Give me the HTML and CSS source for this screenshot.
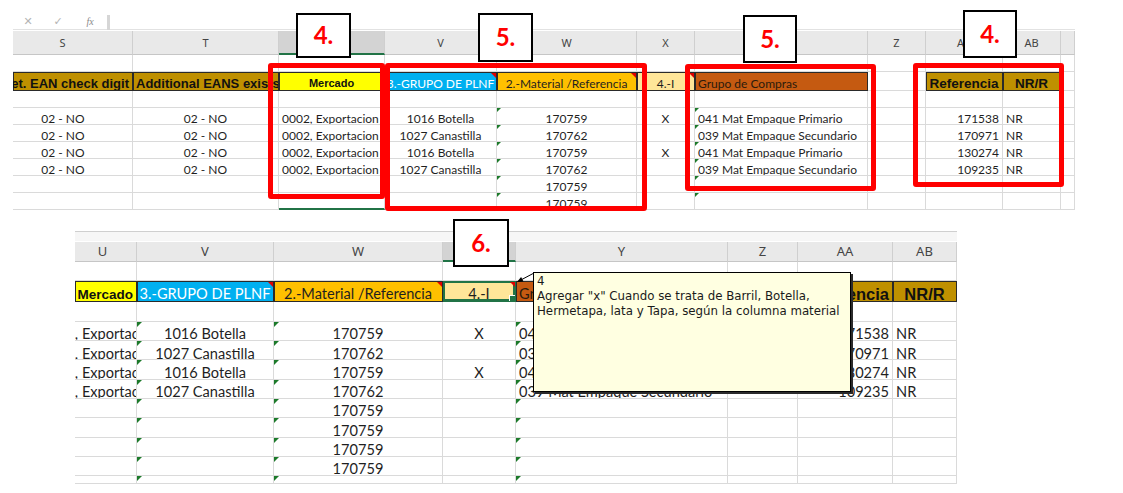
FILE: index.html
```html
<!DOCTYPE html>
<html lang="es">
<head>
<meta charset="utf-8">
<title>Hoja</title>
<link rel="stylesheet" href="styles.css">
</head>
<body>
<div class="page">
  <section class="sheet top">
    <div class="fbar">
      <span class="fico">✕</span>
      <span class="fico">✓</span>
      <span class="fico fx">fx</span>
      <span class="fsep"></span>
      <span class="finput"></span>
    </div>
    <div class="row colhdr">
      <div class="h offs">S</div><div class="h">T</div><div class="h sel">U</div><div class="h">V</div><div class="h">W</div><div class="h">X</div><div class="h">Y</div><div class="h">Z</div><div class="h">AA</div><div class="h">AB</div><div class="h"></div>
    </div>
    <div class="row r17">
      <div class="c"></div><div class="c"></div><div class="c"></div><div class="c"></div><div class="c"></div><div class="c"></div><div class="c"></div><div class="c"></div><div class="c"></div><div class="c"></div><div class="c"></div>
    </div>
    <div class="row r19">
      <div class="c tan bold rt">Ret. EAN check digit</div>
      <div class="c tan bold">Additional EANS exists</div>
      <div class="c yel bold sm ctr">Mercado</div>
      <div class="c blue ctr cm">3.-GRUPO DE PLNF</div>
      <div class="c org ctr cm">2.-Material /Referencia</div>
      <div class="c lt ctr cm">4.-I</div>
      <div class="c brn">Grupo de Compras</div>
      <div class="c"></div>
      <div class="c tan bold lg ctr">Referencia</div>
      <div class="c tan bold lg ctr">NR/R</div>
      <div class="c"></div>
    </div>
    <div class="row r17">
      <div class="c"></div><div class="c"></div><div class="c"></div><div class="c"></div><div class="c"></div><div class="c"></div><div class="c"></div><div class="c"></div><div class="c"></div><div class="c"></div><div class="c"></div>
    </div>
    <div class="row r17">
      <div class="c ctr offs">02 - NO</div><div class="c ctr">02 - NO</div><div class="c">0002, Exportacion</div><div class="c ctr">1016 Botella</div><div class="c ctr g">170759</div><div class="c ctr">X</div><div class="c g">041 Mat Empaque Primario</div><div class="c"></div><div class="c rt">171538</div><div class="c">NR</div><div class="c"></div>
    </div>
    <div class="row r17">
      <div class="c ctr offs">02 - NO</div><div class="c ctr">02 - NO</div><div class="c">0002, Exportacion</div><div class="c ctr">1027 Canastilla</div><div class="c ctr g">170762</div><div class="c ctr"></div><div class="c g">039 Mat Empaque Secundario</div><div class="c"></div><div class="c rt">170971</div><div class="c">NR</div><div class="c"></div>
    </div>
    <div class="row r17">
      <div class="c ctr offs">02 - NO</div><div class="c ctr">02 - NO</div><div class="c">0002, Exportacion</div><div class="c ctr">1016 Botella</div><div class="c ctr g">170759</div><div class="c ctr">X</div><div class="c g">041 Mat Empaque Primario</div><div class="c"></div><div class="c rt">130274</div><div class="c">NR</div><div class="c"></div>
    </div>
    <div class="row r17">
      <div class="c ctr offs">02 - NO</div><div class="c ctr">02 - NO</div><div class="c">0002, Exportacion</div><div class="c ctr">1027 Canastilla</div><div class="c ctr g">170762</div><div class="c ctr"></div><div class="c g">039 Mat Empaque Secundario</div><div class="c"></div><div class="c rt">109235</div><div class="c">NR</div><div class="c"></div>
    </div>
    <div class="row r17">
      <div class="c"></div><div class="c"></div><div class="c"></div><div class="c"></div><div class="c ctr g">170759</div><div class="c"></div><div class="c g"></div><div class="c"></div><div class="c"></div><div class="c"></div><div class="c"></div>
    </div>
    <div class="row r17">
      <div class="c"></div><div class="c"></div><div class="c selbot"></div><div class="c"></div><div class="c ctr g">170759</div><div class="c"></div><div class="c g"></div><div class="c"></div><div class="c"></div><div class="c"></div><div class="c"></div>
    </div>
  </section>

  <section class="sheet bottom">
    <div class="strip"></div>
    <div class="row colhdr">
      <div class="h offu">U</div><div class="h">V</div><div class="h">W</div><div class="h sel"></div><div class="h">Y</div><div class="h">Z</div><div class="h">AA</div><div class="h">AB</div>
    </div>
    <div class="row r20">
      <div class="c"></div><div class="c"></div><div class="c"></div><div class="c"></div><div class="c"></div><div class="c"></div><div class="c"></div><div class="c"></div>
    </div>
    <div class="row r21">
      <div class="c yel bold sm rt">Mercado</div>
      <div class="c blue ctr cm">3.-GRUPO DE PLNF</div>
      <div class="c org ctr cm">2.-Material /Referencia</div>
      <div class="c lt ctr cm active">4.-I</div>
      <div class="c brn">Grupo de Compras</div>
      <div class="c"></div>
      <div class="c tan bold lg rt">Referencia</div>
      <div class="c tan bold lg ctr">NR/R</div>
    </div>
    <div class="row r20">
      <div class="c"></div><div class="c"></div><div class="c"></div><div class="c"></div><div class="c"></div><div class="c"></div><div class="c"></div><div class="c"></div>
    </div>
    <div class="row rd">
      <div class="c cut">0002, Exportacion</div><div class="c ctr g">1016 Botella</div><div class="c ctr g">170759</div><div class="c ctr">X</div><div class="c g">041 Mat Empaque Primario</div><div class="c"></div><div class="c rt">171538</div><div class="c">NR</div>
    </div>
    <div class="row rd">
      <div class="c cut">0002, Exportacion</div><div class="c ctr g">1027 Canastilla</div><div class="c ctr g">170762</div><div class="c ctr"></div><div class="c g">039 Mat Empaque Secundario</div><div class="c"></div><div class="c rt">170971</div><div class="c">NR</div>
    </div>
    <div class="row rd">
      <div class="c cut">0002, Exportacion</div><div class="c ctr g">1016 Botella</div><div class="c ctr g">170759</div><div class="c ctr">X</div><div class="c g">041 Mat Empaque Primario</div><div class="c"></div><div class="c rt">130274</div><div class="c">NR</div>
    </div>
    <div class="row rd">
      <div class="c cut">0002, Exportacion</div><div class="c ctr g">1027 Canastilla</div><div class="c ctr g">170762</div><div class="c ctr"></div><div class="c g">039 Mat Empaque Secundario</div><div class="c"></div><div class="c rt">109235</div><div class="c">NR</div>
    </div>
    <div class="row rd">
      <div class="c"></div><div class="c g"></div><div class="c ctr g">170759</div><div class="c"></div><div class="c g"></div><div class="c"></div><div class="c"></div><div class="c"></div>
    </div>
    <div class="row rd">
      <div class="c"></div><div class="c g"></div><div class="c ctr g">170759</div><div class="c"></div><div class="c g"></div><div class="c"></div><div class="c"></div><div class="c"></div>
    </div>
    <div class="row rd">
      <div class="c"></div><div class="c g"></div><div class="c ctr g">170759</div><div class="c"></div><div class="c g"></div><div class="c"></div><div class="c"></div><div class="c"></div>
    </div>
    <div class="row rd">
      <div class="c"></div><div class="c g"></div><div class="c ctr g">170759</div><div class="c"></div><div class="c g"></div><div class="c"></div><div class="c"></div><div class="c"></div>
    </div>
    <div class="row rlast">
      <div class="c"></div><div class="c g"></div><div class="c g"></div><div class="c"></div><div class="c g"></div><div class="c"></div><div class="c"></div><div class="c"></div>
    </div>
  </section>

  <div class="redbox rb1"></div>
  <div class="redbox rb2"></div>
  <div class="redbox rb3"></div>
  <div class="redbox rb4"></div>

  <div class="tag t1">4.</div>
  <div class="tag t2">5.</div>
  <div class="tag t3">5.</div>
  <div class="tag t4">4.</div>
  <div class="tag t5">6.</div>

  <svg class="connector" width="30" height="22" viewBox="0 0 30 22">
    <line x1="8" y1="15.5" x2="25" y2="6.5" stroke="#000" stroke-width="1"/>
    <polygon points="7,16 11.1,11 13.5,15.4" fill="#000"/>
  </svg>
  <div class="note">
    <div>4</div>
    <div>Agregar "x" Cuando se trata de Barril, Botella,</div>
    <div>Hermetapa, lata y Tapa, según la columna material</div>
  </div>
</div>
</body>
</html>
```

FILE: styles.css
```css
html, body {
  margin: 0;
  padding: 0;
  background: #ffffff;
}

.page {
  position: relative;
  width: 1123px;
  height: 493px;
  overflow: hidden;
  background: #ffffff;
}

.sheet {
  display: flex;
  flex-direction: column;
  overflow: hidden;
}

.sheet.top {
  margin-left: 13px;
  width: 1062px;
  padding-top: 15px;
}

.sheet.bottom {
  margin-left: 75px;
  margin-top: 21px;
  width: 882px;
  height: 253px;
}

.row {
  display: grid;
}

.top .row {
  grid-template-columns: 120px 146px 106px 112px 140px 58px 173px 58px 77px 58px 14px;
}

.bottom .row {
  grid-template-columns: 62px 137px 169px 73px 212px 70px 95px 64px;
}

/* formula bar */
.fbar {
  height: 15px;
  display: flex;
  align-items: center;
  border-bottom: 1px solid #e2e2e2;
  box-sizing: border-box;
}

.fico {
  color: #b4b4b4;
  font-family: "DejaVu Sans", sans-serif;
  font-size: 11px;
  line-height: 14px;
  width: 30px;
  text-align: center;
}

.fico.fx {
  font-family: "Liberation Serif", serif;
  font-style: italic;
  color: #8a8a8a;
  font-size: 10px;
  width: 34px;
}

.fsep {
  width: 3px;
  height: 15px;
  background: #d6d6d6;
}

.finput {
  flex: 1;
  height: 14px;
}

/* column headers */
.colhdr {
  background: #e9e9e9;
  border-top: 1px solid #ffffff;
}

.top .colhdr {
  height: 24px;
}

.bottom .colhdr {
  height: 20px;
}

.h {
  box-sizing: border-box;
  border-right: 1px solid #cfcfcf;
  border-bottom: 1px solid #c6c6c6;
  display: flex;
  align-items: center;
  justify-content: center;
  font-family: "Noto Sans", "Open Sans", sans-serif;
  font-size: 11px;
  color: #444444;
}

.bottom .h {
  font-size: 13px;
}

.h.offs {
  padding-right: 20px;
}

.h.offu {
  padding-right: 6px;
}

.h.sel {
  background: #d3d3d3;
  border-bottom: 2px solid #217346;
}

.strip {
  height: 10px;
  border-top: 1px solid #cfcfcf;
  background: #f6f6f6;
  box-sizing: border-box;
}

/* row heights */
.r17 { height: 17px; }
.r19 { height: 19px; }
.r20 { height: 20px; }
.r21 { height: 21px; }
.rd { height: 19.5px; }
.rlast { height: 8px; }

/* cells */
.c {
  position: relative;
  box-sizing: border-box;
  border-right: 1px solid #dadada;
  border-bottom: 1px solid #dadada;
  display: flex;
  align-items: flex-end;
  justify-content: flex-start;
  overflow: hidden;
  white-space: nowrap;
  padding: 0 3px 0;
  font-family: Lato, "Open Sans", sans-serif;
  font-size: 12px;
  color: #1f1f1f;
  line-height: 0.85;
}

.bottom .c {
  font-size: 14.6px;
  line-height: 0.75;
}

.ctr { justify-content: center; }
.rt { justify-content: flex-end; }

.c.offs {
  padding-right: 22px;
}

.cut {
  text-indent: -34px;
  padding-left: 0;
}

.bold {
  font-family: "Liberation Sans", Arial, sans-serif;
  font-weight: 700;
  font-size: 13px;
  color: #111111;
  padding-bottom: 1px;
}

.bold.sm { font-size: 11px; padding-bottom: 2px; }
.bold.lg { font-size: 13.5px; }

.bottom .bold.sm { font-size: 13.5px; padding-bottom: 1px; }
.bottom .bold.lg { font-size: 16.5px; }

.tan, .yel, .blue, .org, .lt, .brn {
  border-right-color: #2a2a2a;
  border-bottom-color: #2a2a2a;
  box-shadow: inset 1px 1px 0 #2a2a2a;
}

.tan { background: #bf9000; }
.yel { background: #ffff00; }
.blue { background: #00b0f0; color: #ffffff; }
.org { background: #ffc000; }
.lt { background: #ffe699; }
.brn { background: #c55a11; color: #2b1a0c; }

.blue, .org, .lt, .brn {
  padding-bottom: 1px;
}

.selbot {
  border-bottom: 2px solid #217346;
}

/* comment indicator (red) */
.cm::after {
  content: "";
  position: absolute;
  top: 1px;
  right: 0;
  border-top: 5px solid #e00000;
  border-left: 5px solid transparent;
}

/* error indicator (green) */
.g::before {
  content: "";
  position: absolute;
  top: 0;
  left: 0;
  border-top: 4px solid #1c7a2a;
  border-right: 4px solid transparent;
}

.bottom .g::before {
  border-top-width: 5px;
  border-right-width: 5px;
}

/* active selected cell */
.active {
  box-shadow: inset 0 0 0 2px #217346;
  border-right-color: #217346;
  border-bottom-color: #217346;
}

.active::before {
  content: "";
  position: absolute;
  right: -1px;
  bottom: -1px;
  width: 5px;
  height: 5px;
  background: #217346;
  border: 1px solid #ffffff;
}

/* annotation overlays */
.redbox {
  position: absolute;
  box-sizing: border-box;
  border: 5px solid #ff0000;
  border-radius: 3px;
}

.rb1 { left: 268px; top: 63px; width: 117px; height: 136px; }
.rb2 { left: 385px; top: 63px; width: 262px; height: 148px; }
.rb3 { left: 685px; top: 64px; width: 191px; height: 127px; }
.rb4 { left: 913px; top: 63px; width: 151px; height: 124px; }

.tag {
  position: absolute;
  box-sizing: border-box;
  border: 2px solid #000000;
  background: #ffffff;
  color: #ff0000;
  font-family: Lato, "Open Sans", sans-serif;
  font-weight: 700;
  font-size: 24px;
  display: flex;
  align-items: center;
  justify-content: center;
  padding-bottom: 2px;
}

.t1 { left: 296px; top: 13px; width: 55px; height: 45px; }
.t2 { left: 478px; top: 13px; width: 55px; height: 49px; }
.t3 { left: 743px; top: 15px; width: 54px; height: 48px; }
.t4 { left: 963px; top: 10px; width: 54px; height: 48px; }
.t5 { left: 453px; top: 219px; width: 56px; height: 48px; }

/* comment popup */
.connector {
  position: absolute;
  left: 510px;
  top: 266px;
}

.note {
  position: absolute;
  left: 533px;
  top: 272px;
  width: 318px;
  height: 120px;
  box-sizing: border-box;
  background: #ffffe1;
  border: 1px solid #000000;
  box-shadow: 2px 2px 0 #2b2b2b;
  padding: 1px 3px;
  font-family: "DejaVu Sans", Verdana, sans-serif;
  font-size: 11.8px;
  line-height: 15px;
  color: #1a1a1a;
}
```
